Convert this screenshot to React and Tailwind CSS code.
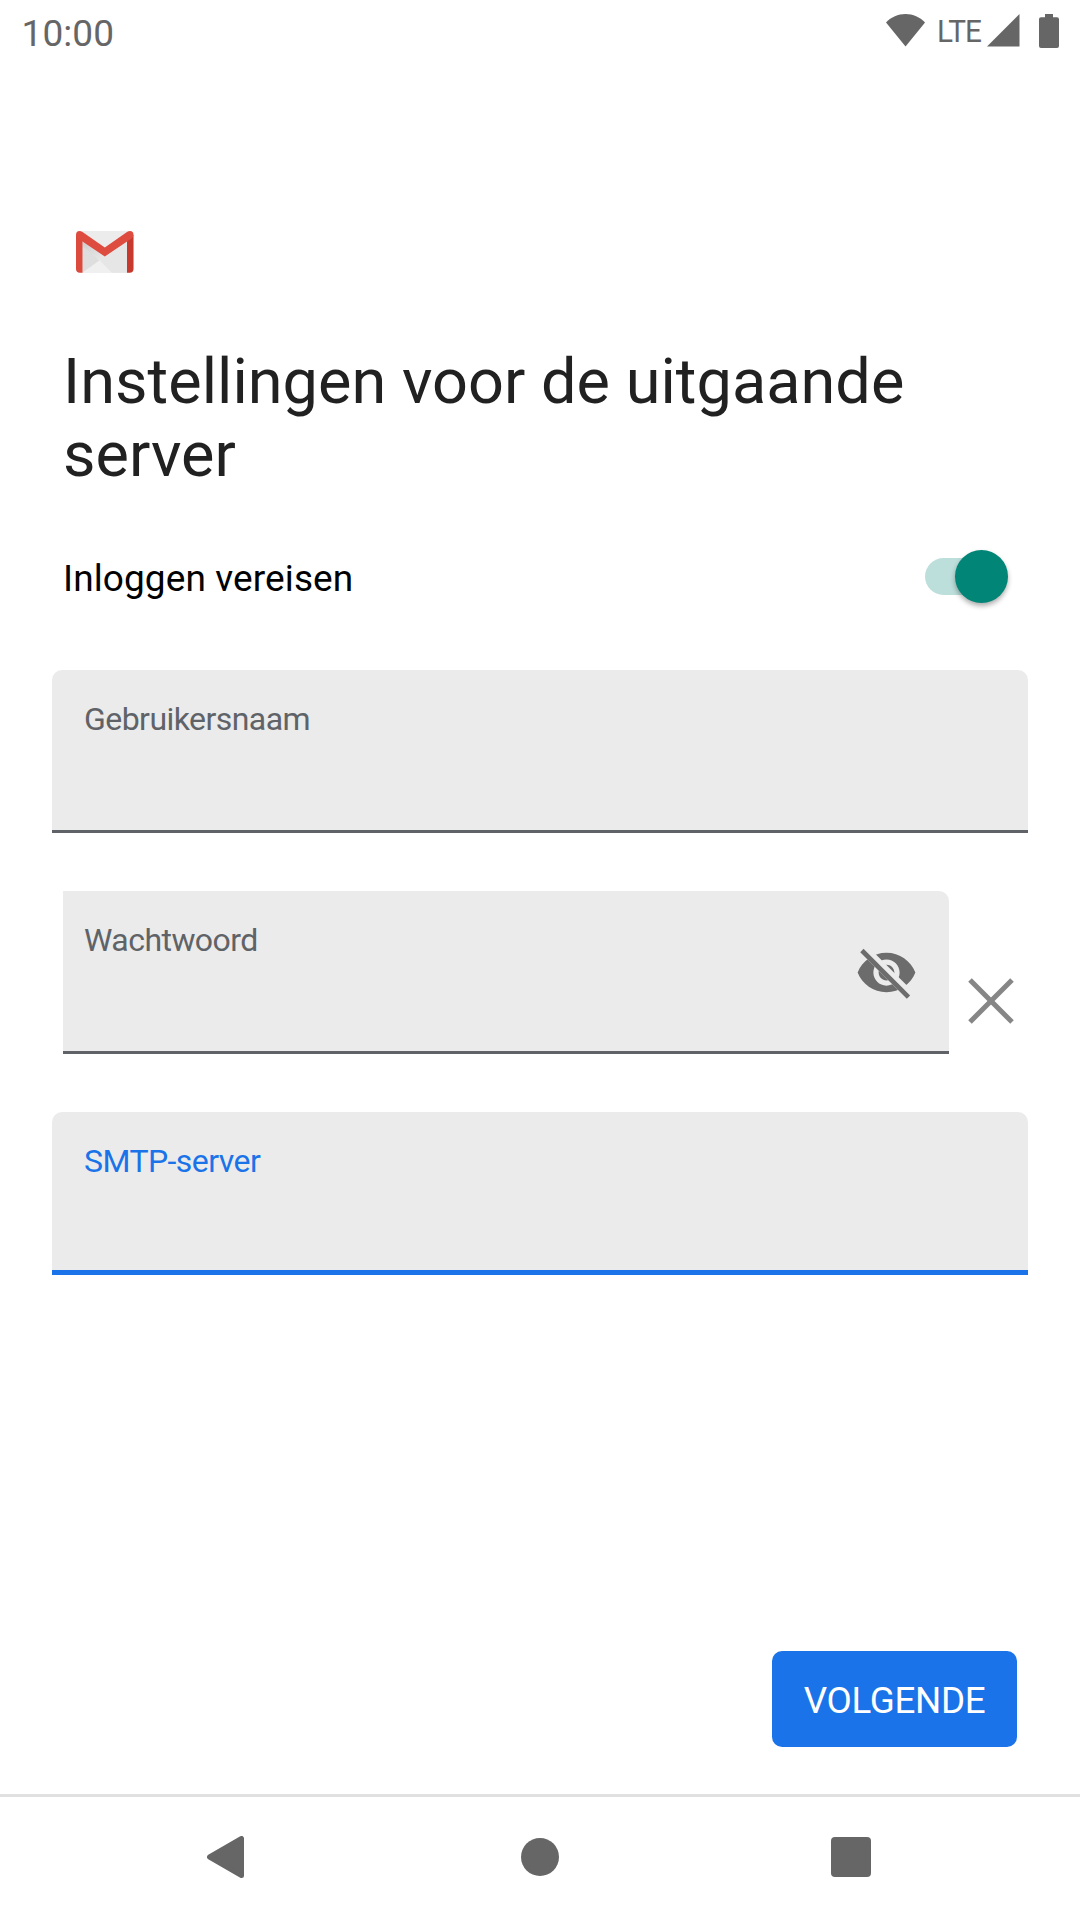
import React from "react";

function StatusBar() {
  return (
    <header className="flex h-16 items-start justify-between pl-[21.500px] pr-[21px] text-[#666666]">
      <span className="pt-[12px] text-[37px] leading-[44px] tracking-[0.1px]">10:00</span>
      <div className="flex pt-[14px]">
        <svg className="h-[33px] w-[39px]" viewBox="0 0 40 33" preserveAspectRatio="none" fill="currentColor">
          <path d="M20 0C12.2 0 5.400 3 0 8.500L20 32.500L40 8.500C34.600 3 27.800 0 20 0Z" />
        </svg>
        <span className="ml-[12px] -mt-[2px] w-[45px] origin-left scale-x-[0.93] whitespace-nowrap text-[32px] leading-[38px] tracking-[-0.9px]">LTE</span>
        <svg className="ml-[5px] h-[33px] w-[33px]" viewBox="0 0 33 33" fill="currentColor">
          <path d="M32.500 0V32.500H0Z" />
        </svg>
        <svg className="ml-[19px] h-[34px] w-[20px]" viewBox="0 0 20 34" fill="currentColor">
          <path d="M6 0h8v3.300h4a2 2 0 0 1 2 2V32a2 2 0 0 1-2 2H2a2 2 0 0 1-2-2V5.300a2 2 0 0 1 2-2h4z" />
        </svg>
      </div>
    </header>
  );
}

function GmailLogo() {
  return (
    <svg className="ml-[13px] h-[43px] w-[58px]" viewBox="0 0 58 43">
      <defs>
        <linearGradient id="envelope-fold" x1="0" y1="0" x2="1" y2="1">
          <stop offset="0" stopColor="#cfcfcf" />
          <stop offset="1" stopColor="#e9e9e9" />
        </linearGradient>
      </defs>
      <path d="M4 0H54L57.500 4V38Q57.500 41.700 54 41.700H4Q0 41.700 0 38V4Z" fill="#ececec" />
      <path d="M6.500 10L28.500 24.500L23.500 29L6.500 17Z" fill="url(#envelope-fold)" />
      <path d="M6.500 15L23.500 29.500L6.500 41.700Z" fill="#dedede" />
      <path d="M6.500 41.700L23.500 29.500L36 41.700Z" fill="#f0f0f0" />
      <path d="M28.500 24.500L51 10V41.700H36L23.500 29Z" fill="#e6e6e6" />
      <path d="M0 4H6.500V41.700H4Q0 41.700 0 38Z" fill="#dc4a3d" />
      <path d="M51 4H57.500V38Q57.500 41.700 53.500 41.700H51Z" fill="#c8392d" />
      <path d="M0 4Q0 0 3.500 0Q5 0 6.500 1.100L28.800 16.500L51 1.100Q52.500 0 54 0Q57.500 0 57.500 4Q57.500 6 55.500 7.400L28.800 25.500L2 7.400Q0 6 0 4Z" fill="#de4c3f" />
    </svg>
  );
}

function Switch() {
  return (
    <div className="flex h-[53px] w-[83px] items-center rounded-full">
      <div className="h-[37px] w-[56px] shrink-0 rounded-l-full bg-[#bcdfdb]" />
      <div className="-ml-[26px] size-[53px] shrink-0 rounded-full bg-[#008577] shadow-[0_3px_5px_rgba(0,0,0,0.32)]" />
    </div>
  );
}

function EyeOff() {
  return (
    <svg className="size-[63px]" viewBox="0 0 24 24" fill="#6c6c6c">
      <defs>
        <clipPath id="outside-slash">
          <path d="M4.540 1.730L22.270 19.460L24 24V0H2Z" />
          <path d="M2 4.270L19.730 22V24H0V0Z" />
        </clipPath>
      </defs>
      <path
        clipPath="url(#outside-slash)"
        fillRule="evenodd"
        d="M12 4.500C7 4.500 2.730 7.610 1 12c1.730 4.390 6 7.500 11 7.500s9.270-3.110 11-7.500c-1.730-4.390-6-7.500-11-7.500zM12 17c-2.760 0-5-2.240-5-5s2.240-5 5-5 5 2.240 5 5-2.240 5-5 5zM12 9c-1.660 0-3 1.340-3 3s1.340 3 3 3 3-1.340 3-3-1.340-3-3-3z"
      />
      <path d="M3.270 4.270L19.740 20.740" fill="none" stroke="#6c6c6c" strokeWidth="1.800" strokeLinecap="square" />
    </svg>
  );
}

function Field({ label, active, inset, children }) {
  return (
    <div
      className={
        active
          ? "flex h-[163px] grow justify-between rounded-t-[10px] bg-[#ebebeb] pl-8 pr-[31px] text-[#1a73e8] shadow-[inset_0_-5px_0_#1a73e8]"
          : inset
            ? "flex h-[163px] grow justify-between rounded-tr-[10px] bg-[#ebebeb] pl-[21px] pr-[31px] text-[#5f6368] shadow-[inset_0_-3px_0_#5f6368]"
            : "flex h-[163px] grow justify-between rounded-t-[10px] bg-[#ebebeb] pl-8 pr-[31px] text-[#5f6368] shadow-[inset_0_-3px_0_#5f6368]"
      }
    >
      <span className="pt-[31px] text-[32px] leading-[37px] tracking-[-0.55px]">{label}</span>
      {children}
    </div>
  );
}

export default function App() {
  return (
    <div className="flex h-[1920px] w-[1080px] flex-col overflow-hidden bg-white font-['Roboto',sans-serif]">
      <StatusBar />
      <main className="flex grow flex-col pt-[167px]">
        <div className="px-[63px]">
          <GmailLogo />
          <h1 className="mt-[71px] text-[63px] leading-[73px] tracking-[0.04px] text-[#212121]">Instellingen voor de uitgaande server</h1>
          <div className="mt-[59px] flex h-[53px] items-center justify-between pr-[9px]">
            <span className="pt-1 text-[37px] leading-[43px] tracking-[0.1px] text-black">Inloggen vereisen</span>
            <Switch />
          </div>
        </div>
        <form className="mt-[67px] flex flex-col gap-[58px] px-[52px]">
          <div className="flex">
            <Field label="Gebruikersnaam" />
          </div>
          <div className="flex pl-[11px]">
            <Field label="Wachtwoord" inset>
              <div className="pt-[50px]">
                <EyeOff />
              </div>
            </Field>
            <div className="flex w-[79px] pl-[19px] pt-[87px]">
              <svg className="size-[46px]" viewBox="0 0 46 46" stroke="#868686" strokeWidth="5">
                <path d="M2 2L44 44M44 2L2 44" />
              </svg>
            </div>
          </div>
          <div className="flex">
            <Field label="SMTP-server" active />
          </div>
        </form>
        <div className="mb-[47px] mt-auto flex justify-end pr-[63px]">
          <button className="h-24 w-[245px] rounded-[10px] bg-[#1a73e8] pt-[3px] text-[36.75px] leading-[43px] tracking-[-0.35px] text-white">VOLGENDE</button>
        </div>
      </main>
      <nav className="flex h-[126px] items-center border-t-[3px] border-[#e0e0e0] pb-[3px] pl-[207px]">
        <svg className="h-[42px] w-[37px]" viewBox="0 0 37 42">
          <path d="M2.500 21L34.500 2.500V39.500Z" fill="#666666" stroke="#666666" strokeWidth="5" strokeLinejoin="round" />
        </svg>
        <div className="ml-[277px] size-[38px] rounded-full bg-[#666666]" />
        <div className="ml-[272px] size-[40px] rounded-[4px] bg-[#666666]" />
      </nav>
    </div>
  );
}
